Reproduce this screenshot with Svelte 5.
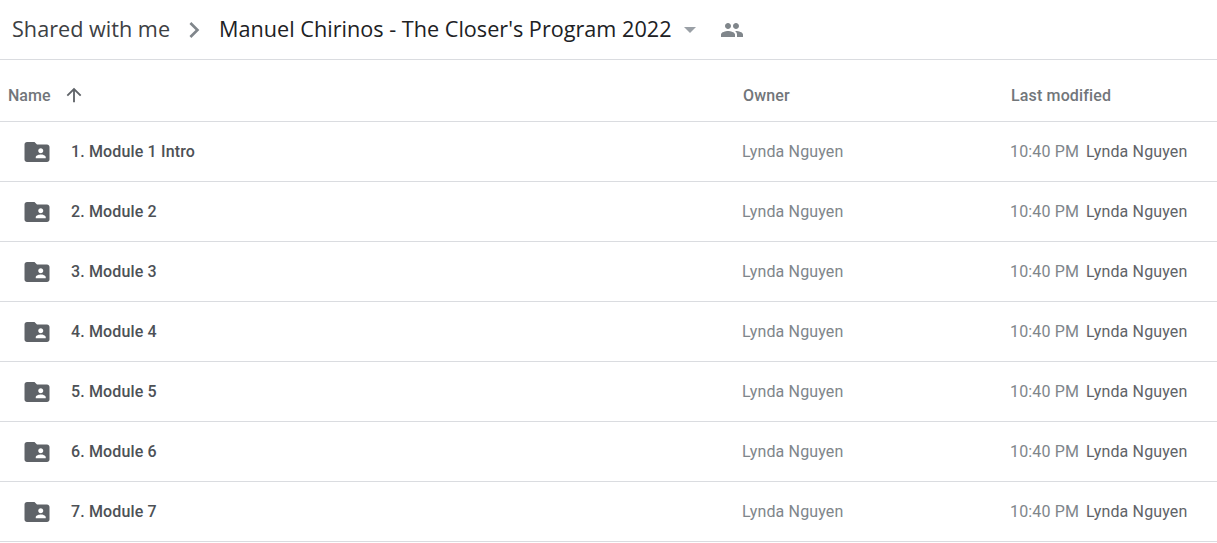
<script>
  const items = ["1. Module 1 Intro", "2. Module 2", "3. Module 3", "4. Module 4", "5. Module 5", "6. Module 6", "7. Module 7"];
</script>

<div class="page">
  <header class="crumbs">
    <span class="parent">Shared with me</span>
    <svg class="chevron" viewBox="0 0 24 24"><path d="M10 6L8.59 7.41 13.17 12l-4.58 4.59L10 18l6-6z" /></svg>
    <span class="current">Manuel Chirinos - The Closer's Program 2022</span>
    <svg class="caret" viewBox="0 0 12 6"><path d="M0 0l6 6 6-6z" /></svg>
    <svg class="people" viewBox="0 0 24 24"><path d="M16 11c1.66 0 2.99-1.34 2.99-3S17.66 5 16 5c-1.66 0-3 1.34-3 3s1.34 3 3 3zm-8 0c1.66 0 2.99-1.34 2.99-3S9.66 5 8 5C6.34 5 5 6.34 5 8s1.34 3 3 3zm0 2c-2.33 0-7 1.17-7 3.5V19h14v-2.5c0-2.33-4.67-3.5-7-3.5zm8 0c-.29 0-.62.02-.97.05 1.16.84 1.97 1.97 1.97 3.45V19h6v-2.5c0-2.33-4.67-3.5-7-3.5z" /></svg>
  </header>

  <div class="row head">
    <div class="name-head">
      <span>Name</span>
      <svg class="arrow" viewBox="0 0 24 24"><path d="M4 12l1.41 1.41L11 7.83V20h2V7.83l5.58 5.59L20 12l-8-8-8 8z" /></svg>
    </div>
    <div class="owner-head">Owner</div>
    <div class="modified-head">Last modified</div>
  </div>

  {#each items as item}
    <div class="row">
      <div class="name">
        <svg class="folder" viewBox="0 0 24 24"><path d="M20 6h-8l-2-2H4c-1.1 0-1.99.9-1.99 2L2 18c0 1.1.9 2 2 2h16c1.1 0 2-.9 2-2V8c0-1.1-.9-2-2-2zm-5 3c1.1 0 2 .9 2 2s-.9 2-2 2-2-.9-2-2 .9-2 2-2zm4 8h-8v-1c0-1.33 2.67-2 4-2s4 .67 4 2v1z" /></svg>
        <span>{item}</span>
      </div>
      <div class="owner">Lynda Nguyen</div>
      <div class="modified"><span class="time">10:40 PM</span><span class="by">Lynda Nguyen</span></div>
    </div>
  {/each}
</div>

<style>
  :global(body) {
    background: #fff;
    font-family: Roboto, "Liberation Sans", sans-serif;
  }

  .page {
    width: 1217px;
    height: 543px;
    overflow: hidden;
  }

  .crumbs {
    display: flex;
    align-items: center;
    height: 59px;
    border-bottom: 1px solid #dadce0;
    padding-left: 12px;
  }

  .parent,
  .current {
    font-family: "Open Sans", sans-serif;
    font-size: 21.65px;
    white-space: nowrap;
    margin-bottom: 2px;
  }

  .parent {
    color: #3c4043;
  }

  .current {
    color: #202124;
  }

  .chevron {
    width: 32px;
    height: 32px;
    margin-left: 8px;
    margin-right: 9px;
    fill: #80868b;
  }

  .caret {
    width: 12px;
    height: 6px;
    margin-left: 12px;
    fill: #9aa0a6;
  }

  .people {
    width: 24px;
    height: 24px;
    margin-left: 24px;
    fill: #80868b;
  }

  .row {
    display: grid;
    grid-template-columns: 742px 268px 1fr;
    align-items: center;
    height: 59px;
    border-bottom: 1px solid #dadce0;
    font-size: 16px;
    letter-spacing: 0.15px;
  }

  .row.head {
    height: 52px;
    padding-top: 9px;
    font-weight: 500;
    color: #72767a;
  }

  .name-head {
    display: flex;
    align-items: center;
    padding-left: 8px;
    letter-spacing: 0;
  }

  .arrow {
    width: 22px;
    height: 22px;
    margin-left: 13px;
    fill: #5f6368;
  }

  .owner-head,
  .modified-head {
    padding-left: 1px;
  }

  .name {
    display: flex;
    align-items: center;
    padding-left: 22px;
    font-weight: 500;
    color: #4d5156;
  }

  .folder {
    width: 30px;
    height: 30px;
    margin-right: 19px;
    fill: #5f6368;
  }

  .owner {
    color: #80868b;
  }

  .modified {
    display: flex;
  }

  .time {
    color: #80868b;
    width: 76px;
  }

  .by {
    color: #5f6368;
  }
</style>
